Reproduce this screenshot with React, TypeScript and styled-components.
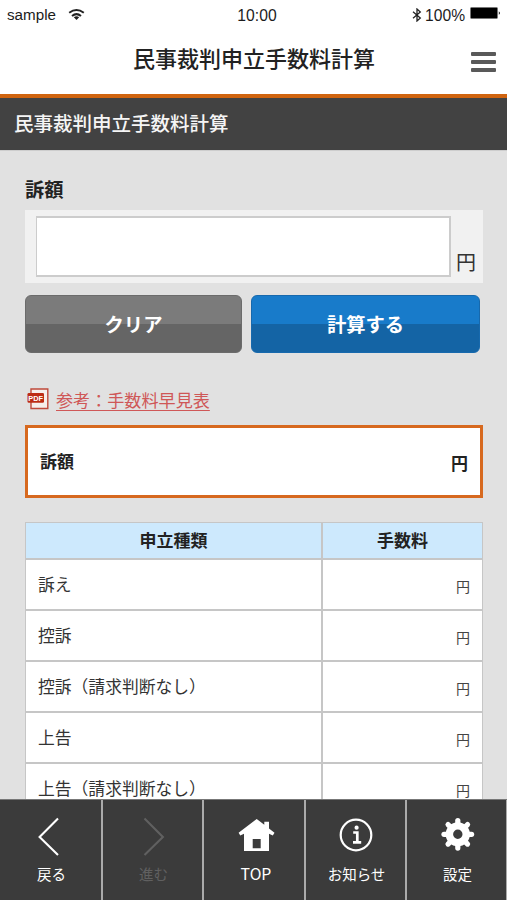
import React from "react";
import styled, { createGlobalStyle } from "styled-components";

const GlobalStyle = createGlobalStyle`
  * { box-sizing: border-box; }
  body {
    margin: 0;
    background: #e1e1e1;
    color: #222;
    font-family: "Noto Sans CJK JP", sans-serif;
  }
`;

const Screen = styled.div`
  display: flex;
  flex-direction: column;
  width: 507px;
  height: 900px;
  overflow: hidden;
  background: #e1e1e1;
`;

const StatusBar = styled.div`
  flex: none;
  display: grid;
  grid-template-columns: 1fr auto 1fr;
  height: 28px;
  padding: 0 6px 0 7px;
  background: #fff;
  color: #1c1c1c;
  font: 15.5px/28px "Liberation Sans", sans-serif;
`;

const StatusGroup = styled.div<{ $end?: boolean }>`
  display: flex;
  align-items: center;
  justify-content: ${(p) => (p.$end ? "flex-end" : "flex-start")};
  svg { display: block; }
`;

const Carrier = styled.span`
  margin: -1px 12px 0 0;
  font-size: 15.2px;
`;

const Clock = styled.span`
  padding: 2px 0 0 6px;
  font-size: 15.7px;
`;

const Percent = styled.span`
  margin: 1px 5px 0 3px;
  font-size: 15.6px;
`;

const Header = styled.header`
  flex: none;
  display: grid;
  grid-template-columns: 36px 1fr 36px;
  align-items: center;
  height: 70px;
  padding: 0 11px 4px;
  border-bottom: 4px solid #d0640f;
  background: #fff;
`;

const HeaderTitle = styled.h1`
  grid-column: 2;
  margin: -4px 0 0 1px;
  color: #222;
  font-size: 22px;
  font-weight: 500;
  line-height: 32px;
  text-align: center;
  white-space: nowrap;
`;

const MenuButton = styled.button`
  display: flex;
  flex-direction: column;
  justify-self: end;
  gap: 4px;
  width: 25px;
  margin-top: 6px;
  padding: 0;
  border: 0;
  background: none;
`;

const MenuLine = styled.span`
  height: 4px;
  border-radius: 1px;
  background: #595959;
`;

const SectionBar = styled.h2`
  flex: none;
  height: 53px;
  margin: 0;
  padding-left: 14px;
  border-bottom: 1px solid #cdcdcd;
  background: #424242;
  color: #f5f5f5;
  font-size: 19.5px;
  font-weight: 500;
  line-height: 49px;
`;

const Content = styled.main`
  flex: 1;
  min-height: 0;
  overflow: hidden;
  padding: 23px 24px 0 25px;
`;

const FieldLabel = styled.label`
  display: block;
  height: 36px;
  font-size: 19.3px;
  font-weight: 700;
  line-height: 30px;
`;

const FieldPanel = styled.div`
  display: flex;
  align-items: flex-end;
  height: 73px;
  padding: 6px 0 6px 11px;
  background: #f1f1f1;
`;

const AmountInput = styled.input`
  width: 415px;
  height: 61px;
  padding: 0 12px;
  border: 2px solid #ccc;
  border-left-width: 1px;
  border-radius: 0;
  background: #fff;
  font: 22px "Noto Sans CJK JP", sans-serif;
`;

const FieldUnit = styled.span`
  margin-left: 5px;
  color: #333;
  font-size: 20px;
  line-height: 30px;
`;

const ButtonRow = styled.div`
  display: grid;
  grid-template-columns: 217px 229px;
  gap: 9px;
  margin-top: 12px;
`;

const ActionButton = styled.button<{ $primary?: boolean }>`
  height: 58px;
  padding: 0 0 1px;
  border: 1px solid ${(p) => (p.$primary ? "#1769ad" : "#6b6b6b")};
  border-radius: 6px;
  background: ${(p) =>
    p.$primary
      ? "linear-gradient(#187bca 0 50%, #1464a5 50%)"
      : "linear-gradient(#7b7b7b 0 50%, #656565 50%)"};
  color: #fff;
  font: 700 19.3px "Noto Sans CJK JP", sans-serif;
`;

const ReferenceRow = styled.div`
  display: flex;
  align-items: center;
  gap: 7px;
  height: 30px;
  margin-top: 30px;
  padding-left: 2px;
  svg { display: block; margin-top: 2px; }
`;

const ReferenceLink = styled.a`
  height: 25px;
  margin-top: 2px;
  color: #cf5757;
  font-size: 17.1px;
  line-height: 25px;
  text-decoration: underline;
  text-decoration-thickness: 1px;
  text-underline-offset: 3px;
`;

const ResultBox = styled.section`
  display: flex;
  align-items: center;
  justify-content: space-between;
  height: 73px;
  margin-top: 12px;
  padding: 0 12px 3px;
  border: 3px solid #d7691f;
  background: #fff;
  font-size: 17px;
  font-weight: 700;
`;

const ResultUnit = styled.span`
  margin-top: 5px;
`;

const FeeTable = styled.div`
  margin-top: 24px;
  border: solid #c6c6c6;
  border-width: 1px 1px 0;
`;

const FeeRow = styled.div<{ $head?: boolean }>`
  display: grid;
  grid-template-columns: 297px 1fr;
  height: ${(p) => (p.$head ? "37px" : "51px")};
  border-bottom: 2px solid #c6c6c6;
  background: ${(p) => (p.$head ? "#cde9fd" : "#fff")};
  font-weight: ${(p) => (p.$head ? 700 : 400)};
`;

const HeadCell = styled.div<{ $divided?: boolean }>`
  border-right: ${(p) => (p.$divided ? "2px solid #c6c6c6" : "0")};
  font-size: 17px;
  line-height: 34px;
  text-align: center;
`;

const NameCell = styled.div`
  padding-left: 12px;
  border-right: 2px solid #c6c6c6;
  color: #333;
  font-size: 16.8px;
  line-height: 48px;
  white-space: nowrap;
`;

const FeeCell = styled.div`
  padding-right: 12px;
  color: #444;
  font-size: 14px;
  line-height: 53px;
  text-align: right;
`;

const BottomNav = styled.nav`
  flex: none;
  display: grid;
  grid-template-columns: 103px 101px 102px 101px 100px;
  height: 101px;
  border-top: 1px solid #777;
  background: #3b3b3b;
`;

const NavItem = styled.button<{ $disabled?: boolean }>`
  display: flex;
  flex-direction: column;
  align-items: center;
  padding: 13px 0 0 2px;
  border: 0;
  border-right: 2px solid #aaa;
  background: transparent;
  color: ${(p) => (p.$disabled ? "#606060" : "#fff")};
  &:last-child { border-right-width: 1px; }
  svg { display: block; width: 44px; height: 44px; }
`;

const NavLabel = styled.span<{ $latin?: boolean }>`
  margin-top: 5px;
  padding-left: ${(p) => (p.$latin ? "2px" : "0")};
  color: ${"inherit"};
  font: ${(p) => (p.$latin ? "15.8px" : "14.5px")}/24px "Noto Sans CJK JP", sans-serif;
`;

const WifiIcon = () => (
  <svg width="17" height="13" viewBox="0 0 17 13" fill="none" stroke="#222" strokeWidth="2">
    <path d="M1.2 3.8Q8.5-1.6 15.8 3.8M4 7Q8.5 3.3 13 7" />
    <path d="M5.8 8.2Q8.5 6.5 11.2 8.2L8.5 11Z" fill="#222" stroke="none" />
  </svg>
);

const BluetoothIcon = () => (
  <svg width="10" height="14" viewBox="0 0 10 14" fill="none" stroke="#222" strokeWidth="1.3">
    <path d="M1 3.8 8.3 10 5 13V1L8.3 4 1 10.2" />
  </svg>
);

const BatteryIcon = () => (
  <svg width="31" height="16" viewBox="0 0 31 16">
    <rect x=".5" y=".5" width="27" height="11" rx="1" fill="#000" stroke="#777" />
    <path d="M28.8 4.2Q31.2 6 28.8 7.8Z" fill="#222" />
  </svg>
);

const PdfIcon = () => (
  <svg width="22" height="22" viewBox="0 0 22 22">
    <path d="M4 1H20.8V20.5H4Z" fill="#f6eeeb" stroke="#bf4a3b" strokeWidth="1.4" />
    <rect x="0.5" y="5" width="16.5" height="9.8" rx="1.3" fill="#bd2c14" />
    <text x="8.7" y="12.7" fill="#fff" fontFamily="Liberation Sans, sans-serif" fontSize="7.4" fontWeight="700" textAnchor="middle">PDF</text>
  </svg>
);

const BackIcon = () => (
  <svg viewBox="0 0 44 44" fill="none" stroke="currentColor" strokeWidth="2.1">
    <path d="M28 5.5 9.6 24 28 42" />
  </svg>
);

const ForwardIcon = () => (
  <svg viewBox="0 0 44 44" fill="none" stroke="currentColor" strokeWidth="2.1">
    <path d="M12.5 5.5 30.9 24 12.5 42" />
  </svg>
);

const HomeIcon = () => (
  <svg viewBox="0 0 44 44" fill="currentColor" fillRule="evenodd">
    <path d="M23.7 6 5.6 19.8 7.3 22.6 11 20.8V38H36V20.8L39.8 22.6 41.5 19.8 36 15.6V8.8H31.3V11.8ZM19.7 26H27.7V35.2H19.7Z" />
  </svg>
);

const InfoIcon = () => (
  <svg viewBox="0 0 44 44" fill="none" stroke="currentColor">
    <circle cx="21" cy="22" r="15.3" strokeWidth="2.2" />
    <circle cx="21.6" cy="14.7" r="2.1" fill="currentColor" stroke="none" />
    <path d="M18.2 19.5H22.3V29M18 29.3H26.2" strokeWidth="2.7" />
  </svg>
);

const GearIcon = () => (
  <svg viewBox="0 0 44 44" fill="none" stroke="currentColor">
    <circle cx="21.8" cy="21.3" r="8.4" strokeWidth="7.4" />
    <g strokeWidth="5.2" strokeLinecap="round">
      {[0, 45, 90, 135, 180, 225, 270, 315].map((angle) => (
        <path key={angle} d="M21.8 7.5V12" transform={`rotate(${angle} 21.8 21.3)`} />
      ))}
    </g>
  </svg>
);

const feeTypes = ["訴え", "控訴", "控訴（請求判断なし）", "上告", "上告（請求判断なし）"];

const navItems = [
  { label: "戻る", Icon: BackIcon },
  { label: "進む", Icon: ForwardIcon, disabled: true },
  { label: "TOP", Icon: HomeIcon, latin: true },
  { label: "お知らせ", Icon: InfoIcon },
  { label: "設定", Icon: GearIcon },
];

export default function App() {
  return (
    <>
      <GlobalStyle />
      <Screen>
        <StatusBar>
          <StatusGroup>
            <Carrier>sample</Carrier>
            <WifiIcon />
          </StatusGroup>
          <Clock>10:00</Clock>
          <StatusGroup $end>
            <BluetoothIcon />
            <Percent>100%</Percent>
            <BatteryIcon />
          </StatusGroup>
        </StatusBar>
        <Header>
          <HeaderTitle>民事裁判申立手数料計算</HeaderTitle>
          <MenuButton aria-label="メニュー">
            <MenuLine />
            <MenuLine />
            <MenuLine />
          </MenuButton>
        </Header>
        <SectionBar>民事裁判申立手数料計算</SectionBar>
        <Content>
          <FieldLabel htmlFor="amount">訴額</FieldLabel>
          <FieldPanel>
            <AmountInput id="amount" />
            <FieldUnit>円</FieldUnit>
          </FieldPanel>
          <ButtonRow>
            <ActionButton>クリア</ActionButton>
            <ActionButton $primary>計算する</ActionButton>
          </ButtonRow>
          <ReferenceRow>
            <PdfIcon />
            <ReferenceLink href="#">参考：手数料早見表</ReferenceLink>
          </ReferenceRow>
          <ResultBox>
            <span>訴額</span>
            <ResultUnit>円</ResultUnit>
          </ResultBox>
          <FeeTable>
            <FeeRow $head>
              <HeadCell $divided>申立種類</HeadCell>
              <HeadCell>手数料</HeadCell>
            </FeeRow>
            {feeTypes.map((name) => (
              <FeeRow key={name}>
                <NameCell>{name}</NameCell>
                <FeeCell>円</FeeCell>
              </FeeRow>
            ))}
          </FeeTable>
        </Content>
        <BottomNav>
          {navItems.map(({ label, Icon, disabled, latin }) => (
            <NavItem key={label} $disabled={disabled}>
              <Icon />
              <NavLabel $latin={latin}>{label}</NavLabel>
            </NavItem>
          ))}
        </BottomNav>
      </Screen>
    </>
  );
}
